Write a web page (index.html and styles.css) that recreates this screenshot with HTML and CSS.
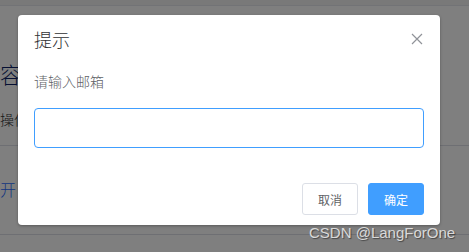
FILE: index.html
```html
<!DOCTYPE html>
<html lang="zh">
<head>
<meta charset="utf-8">
<title>提示</title>
<link rel="stylesheet" href="styles.css">
</head>
<body>
<div class="page">
  <div class="topbar"></div>
  <div class="content">
    <div class="heading">容</div>
    <div class="ops">操作</div>
    <div class="divider"></div>
    <div class="link">开 日</div>
    <div class="divider bottom"></div>
  </div>
</div>
<div class="overlay"></div>
<div class="dialog">
  <div class="dialog-header">
    <span class="dialog-title">提示</span>
    <button class="close" aria-label="关闭">
      <svg width="12" height="12" viewBox="0 0 12 12"><path d="M1 1 L11 11 M11 1 L1 11" stroke="#909399" stroke-width="1.2" fill="none"/></svg>
    </button>
  </div>
  <div class="dialog-body">
    <div class="message">请输入邮箱</div>
    <input class="input" type="text">
  </div>
  <div class="dialog-footer">
    <button class="btn btn-default">取消</button>
    <button class="btn btn-primary">确定</button>
  </div>
</div>
<div class="watermark">CSDN @LangForOne</div>
</body>
</html>
```

FILE: styles.css
```css
html, body {
  margin: 0;
  padding: 0;
  width: 469px;
  height: 252px;
  overflow: hidden;
  font-family: "Noto Sans CJK SC", "Noto Sans", sans-serif;
}
.page {
  width: 469px;
  height: 252px;
  background: #fff;
  color: #2c3e50;
}
.topbar {
  height: 5px;
  background: #f2f2f2;
  border-bottom: 1px solid #e4e7ed;
}
.content {
  display: flex;
  flex-direction: column;
}
.heading {
  font-size: 22px;
  line-height: 30px;
  margin-top: 52px;
  font-weight: 300;
  color: #0a1f66;
}
.ops {
  font-size: 14px;
  line-height: 20px;
  margin-top: 21px;
  font-weight: 300;
  color: #303133;
}
.divider {
  height: 0;
  border-top: 1px solid #dcdfe6;
  margin-top: 16px;
}
.divider.bottom {
  margin-top: 34px;
}
.link {
  font-size: 16px;
  line-height: 22px;
  margin-top: 32px;
  font-weight: 300;
  color: #2a6cff;
}
.overlay {
  position: absolute;
  inset: 0;
  background: rgba(0, 0, 0, 0.5);
}
.dialog {
  position: absolute;
  left: 18px;
  top: 15px;
  width: 422px;
  height: 210px;
  box-sizing: border-box;
  background: #fff;
  border-radius: 4px;
  box-shadow: 0 1px 3px rgba(0, 0, 0, 0.3);
  padding: 12px 16px 10px;
  display: flex;
  flex-direction: column;
}
.dialog-header {
  display: flex;
  align-items: center;
  justify-content: space-between;
  height: 24px;
}
.dialog-title {
  font-size: 18px;
  line-height: 24px;
  font-weight: 300;
  color: #303133;
}
.close {
  border: 0;
  background: none;
  padding: 0;
  margin-right: 1px;
  width: 12px;
  height: 12px;
  display: flex;
  cursor: pointer;
}
.dialog-body {
  display: flex;
  flex-direction: column;
}
.message {
  margin-top: 20px;
  font-size: 14px;
  line-height: 20px;
  font-weight: 300;
  color: #606266;
}
.input {
  margin-top: 17px;
  height: 40px;
  box-sizing: border-box;
  width: 100%;
  border: 1px solid #409eff;
  border-radius: 4px;
  outline: none;
  padding: 0 15px;
  font-size: 14px;
  font-family: inherit;
}
.dialog-footer {
  margin-top: auto;
  display: flex;
  justify-content: flex-end;
  gap: 10px;
}
.btn {
  width: 56px;
  height: 32px;
  box-sizing: border-box;
  border-radius: 3px;
  font-size: 12px;
  font-family: inherit;
  padding: 0;
  cursor: pointer;
}
.btn-default {
  background: #fff;
  border: 1px solid #dcdfe6;
  color: #606266;
}
.btn-primary {
  background: #409eff;
  border: 1px solid #409eff;
  color: #fff;
}
.watermark {
  position: absolute;
  left: 309px;
  top: 223px;
  font-family: "Liberation Sans", Arial, sans-serif;
  font-size: 15px;
  line-height: 20px;
  color: #d9d9d9;
  text-shadow: 1px 1px 1px rgba(0, 0, 0, 0.45);
  white-space: nowrap;
}
```
